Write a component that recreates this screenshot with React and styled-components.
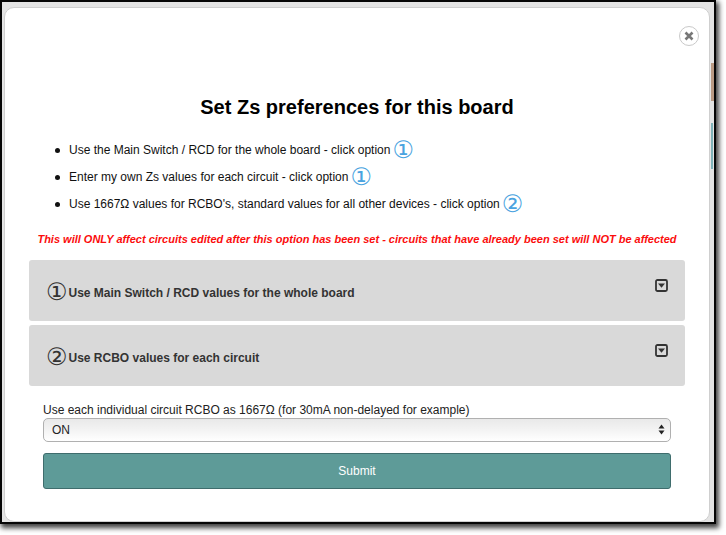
import React from "react";
import styled, { createGlobalStyle } from "styled-components";

const Global = createGlobalStyle`
  html, body { margin: 0; padding: 0; background: #fff; }
  body { font-family: "Liberation Sans", Arial, sans-serif; }
`;

const Canvas = styled.div`
  width: 726px;
  height: 535px;
  overflow: hidden;
  background: #fff;
`;

const Frame = styled.div`
  box-sizing: border-box;
  width: 716px;
  height: 524px;
  border: 2px solid #060606;
  padding: 5px 4px 0 2px;
  background:
    linear-gradient(#b99a84, #b99a84) 709px 61px / 3px 38px no-repeat,
    linear-gradient(#7fb2b8, #7fb2b8) 709px 121px / 2px 46px no-repeat,
    #e4e4e4;
  box-shadow: 2px 3px 5px 1px rgba(0, 0, 0, 0.75);
`;

const Modal = styled.div`
  box-sizing: border-box;
  width: 706px;
  height: 515px;
  position: relative;
  background: #fff;
  border: 1px solid #cfcfcf;
  border-radius: 10px;
  padding: 87px 24px 0;
  color: #111;
`;

const CloseButton = styled.button`
  position: absolute;
  top: 18px;
  right: 10px;
  width: 20px;
  height: 20px;
  padding: 0;
  border: 1px solid #c9c9c9;
  border-radius: 50%;
  background: #fff;
  display: flex;
  align-items: center;
  justify-content: center;
`;

const Title = styled.h1`
  margin: 0;
  font-size: 20px;
  line-height: 24px;
  font-weight: 700;
  color: #000;
  text-align: center;
`;

const Points = styled.ul`
  list-style: none;
  margin: 17px 0 0;
  padding: 0 0 0 26px;
`;

const Point = styled.li`
  height: 27px;
  display: flex;
  align-items: center;
  font-size: 12px;
  color: #111;
  position: relative;
  padding-left: 14px;
  &::before {
    content: "";
    position: absolute;
    left: 0;
    top: 12px;
    width: 5px;
    height: 5px;
    border-radius: 50%;
    background: #111;
  }
`;

const Circled = styled.span`
  font-family: "DejaVu Sans", "Liberation Sans", sans-serif;
  font-size: 24px;
  font-weight: 400;
  line-height: 1;
  color: ${(p) => p.$color || "#4aa3e0"};
  margin-left: ${(p) => p.$gap ?? 2}px;
  margin-right: ${(p) => p.$after ?? 0}px;
`;

const Warning = styled.p`
  margin: 15px 0 0;
  font-size: 11px;
  line-height: 14px;
  font-weight: 700;
  font-style: italic;
  color: #fb0d0d;
  text-align: center;
`;

const Accordion = styled.div`
  margin: 14px 0 0;
  display: flex;
  flex-direction: column;
  gap: 4px;
`;

const Panel = styled.div`
  height: 61px;
  box-sizing: border-box;
  background: #d9d9d9;
  border-radius: 3px;
  padding: 0 17px;
  display: flex;
  justify-content: space-between;
`;

const PanelTitle = styled.div`
  display: flex;
  align-items: center;
  font-size: 12px;
  font-weight: 700;
  color: #333;
  margin-top: 2px;
  line-height: 14px;
`;

const PanelText = styled.span`
  position: relative;
  top: 1px;
`;

const ToggleIcon = styled.svg`
  width: 13px;
  height: 13px;
  margin-top: 19px;
`;

const Form = styled.form`
  margin: 17px 14px 0;
`;

const FieldLabel = styled.label`
  display: block;
  font-size: 12px;
  line-height: 14px;
  color: #222;
`;

const SelectWrap = styled.div`
  position: relative;
  margin-top: 1px;
`;

const Select = styled.select`
  appearance: none;
  display: block;
  width: 100%;
  height: 24px;
  box-sizing: border-box;
  border: 1px solid #b0b0b0;
  border-radius: 5px;
  padding: 0 0 0 8px;
  font: 12px "Liberation Sans", Arial, sans-serif;
  color: #222;
  background: linear-gradient(#e9e9e9, #f1f1f1 40%, #fff);
`;

const SelectArrows = styled.svg`
  position: absolute;
  right: 6px;
  top: 6px;
  width: 7px;
  height: 11px;
  pointer-events: none;
`;

const Submit = styled.button`
  display: block;
  width: 100%;
  height: 36px;
  margin-top: 11px;
  box-sizing: border-box;
  border: 1px solid #3f6d6d;
  border-radius: 3px;
  background: #5e9b98;
  color: #fff;
  font: 12px "Liberation Sans", Arial, sans-serif;
`;

const Toggle = () => (
  <ToggleIcon viewBox="0 0 13 13" aria-hidden="true">
    <rect x="1" y="1" width="11" height="11" rx="1.5" fill="none" stroke="#333" strokeWidth="1.8" />
    <path d="M3 4.4h7L6.5 8.8z" fill="#333" />
  </ToggleIcon>
);

export default function App() {
  return (
    <Canvas>
      <Global />
      <Frame>
        <Modal>
          <CloseButton type="button" aria-label="Close">
            <svg width="10" height="10" viewBox="0 0 10 10" aria-hidden="true">
              <path d="M1.5 1.5l7 7M8.5 1.5l-7 7" stroke="#777" strokeWidth="2.6" strokeLinecap="butt" />
            </svg>
          </CloseButton>
          <Title>Set Zs preferences for this board</Title>
          <Points>
            <Point>
              Use the Main Switch / RCD for the whole board - click option <Circled>①</Circled>
            </Point>
            <Point>
              Enter my own Zs values for each circuit - click option <Circled>①</Circled>
            </Point>
            <Point>
              Use 1667Ω values for RCBO's, standard values for all other devices - click option <Circled>②</Circled>
            </Point>
          </Points>
          <Warning>
            This will ONLY affect circuits edited after this option has been set - circuits that have already been set will NOT be affected
          </Warning>
          <Accordion>
            <Panel>
              <PanelTitle>
                <Circled $color="#333" $gap={0} $after={1}>①</Circled>
                <PanelText>Use Main Switch / RCD values for the whole board</PanelText>
              </PanelTitle>
              <Toggle />
            </Panel>
            <Panel>
              <PanelTitle>
                <Circled $color="#333" $gap={0} $after={1}>②</Circled>
                <PanelText>Use RCBO values for each circuit</PanelText>
              </PanelTitle>
              <Toggle />
            </Panel>
          </Accordion>
          <Form>
            <FieldLabel htmlFor="rcbo">
              Use each individual circuit RCBO as 1667Ω (for 30mA non-delayed for example)
            </FieldLabel>
            <SelectWrap>
              <Select id="rcbo" defaultValue="ON">
                <option>ON</option>
                <option>OFF</option>
              </Select>
              <SelectArrows viewBox="0 0 7 11" aria-hidden="true">
                <path d="M3.5 0.5L6.5 4.5H0.5zM3.5 10.5L0.5 6.5H6.5z" fill="#222" />
              </SelectArrows>
            </SelectWrap>
            <Submit type="button">Submit</Submit>
          </Form>
        </Modal>
      </Frame>
    </Canvas>
  );
}
